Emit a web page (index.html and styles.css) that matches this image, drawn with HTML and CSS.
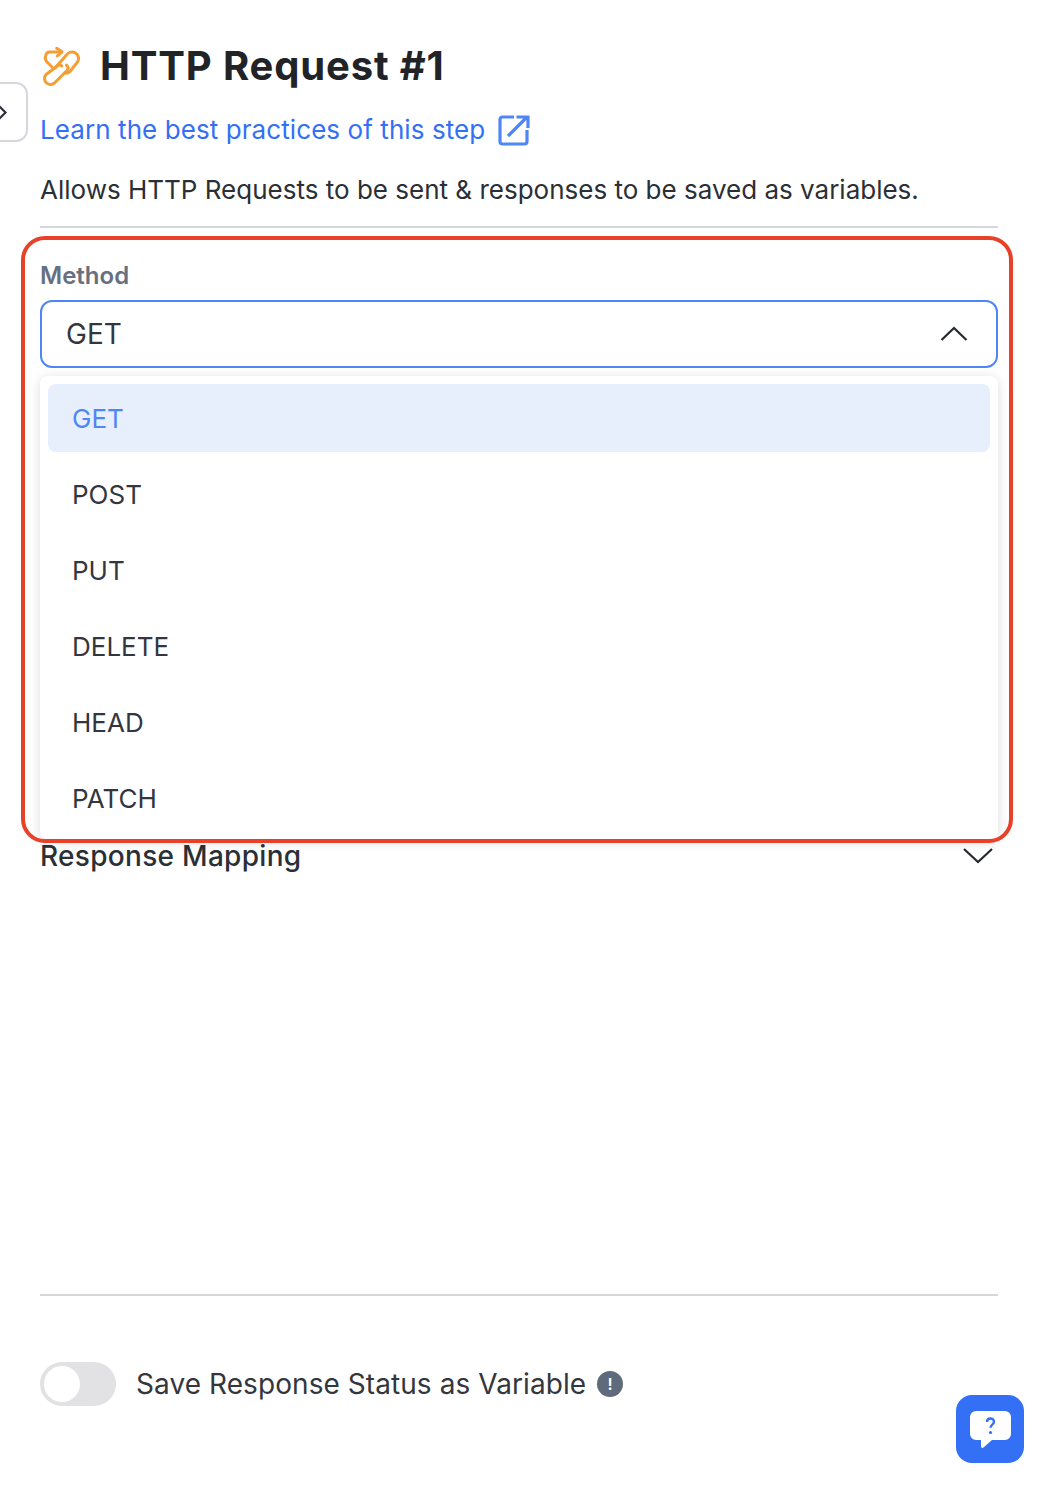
FILE: index.html
```html
<!DOCTYPE html>
<html>
  <head>
    <meta charset="UTF-8" />
    <title>HTTP Request #1</title>
    <link rel="stylesheet" href="styles.css">
  </head>
  <body>
    <button class="collapse-tab" type="button" aria-label="Collapse">
      <svg viewBox="0 0 12 20" width="12" height="20">
        <path d="M1 4l6.500 6.500L1 17" fill="none" stroke="#2b2f36" stroke-width="2.200" />
      </svg>
    </button>

    <div class="panel">
      <div class="step-header">
        <svg class="step-icon" viewBox="0 0 40 40" width="40" height="40">
          <g fill="none" stroke="#f59e33" stroke-width="3" stroke-linecap="round" stroke-linejoin="round">
            <path d="M11.700 20.700L7 16c-1.800-1.800-2-4-1.500-6 .5-2.500 2-4 4-4H21" />
            <path d="M16.700 2.300L22 5.800l-4.700 4.200" />
            <path d="M15 22L26.500 9a6.500 6.500 0 0 1 11 7L30 25.500c-1.500 1.500-3.500 2-5 1" />
            <path d="M26.500 19c1.800 1.800 2 4 .3 5.800L15 36.500a6 6 0 0 1-9-8L18 19.500c1-1 2.500-1 3.700.5" />
          </g>
        </svg>
        <h1 class="step-title">HTTP Request #1</h1>
      </div>

      <a class="learn-link" href="#">
        Learn the best practices of this step
        <svg viewBox="0 0 32 32" width="32" height="32">
          <path d="M16 3H4.500A2.500 2.500 0 0 0 2 5.500v22A2.500 2.500 0 0 0 4.500 30h22a2.500 2.500 0 0 0 2.500-2.500V16" fill="none" stroke="#4f86f7" stroke-width="3.200" />
          <path d="M10 22L29 3M18.500 3H30v11" fill="none" stroke="#4f86f7" stroke-width="3.200" />
        </svg>
      </a>

      <p class="step-desc">Allows HTTP Requests to be sent &amp; responses to be saved as variables.</p>

      <hr class="divider" />

      <div class="field">
        <label class="field-label">Method</label>
        <div class="select-box">
          <span>GET</span>
          <svg viewBox="0 0 28 16" width="28" height="16">
            <path d="M1.500 14L14 2l12.500 12" fill="none" stroke="#26292e" stroke-width="2.200" />
          </svg>
        </div>

        <ul class="dropdown">
          <li class="option selected">GET</li>
          <li class="option">POST</li>
          <li class="option">PUT</li>
          <li class="option">DELETE</li>
          <li class="option">HEAD</li>
          <li class="option">PATCH</li>
        </ul>
        <div class="highlight-box"></div>
      </div>

      <div class="section-row">
        <span>Response Mapping</span>
        <svg viewBox="0 0 32 18" width="32" height="18">
          <path d="M2 2l14 13L30 2" fill="none" stroke="#26292e" stroke-width="2.200" />
        </svg>
      </div>

      <hr class="divider bottom-divider" />

      <div class="toggle-row">
        <span class="toggle"><span class="toggle-knob"></span></span>
        <span class="toggle-label">Save Response Status as Variable</span>
        <span class="info-dot">!</span>
      </div>
    </div>

    <button class="help-btn" type="button" aria-label="Help">
      <svg viewBox="0 0 43 40" width="43" height="40">
        <path d="M7 1h29a6 6 0 0 1 6 6v17a6 6 0 0 1-6 6H23l-8.500 7.500c-1 .8-2.500.3-2.500-1V30H7a6 6 0 0 1-6-6V7a6 6 0 0 1 6-6z" fill="#fff" />
        <path d="M18 12c0-2 1.500-3.500 3.500-3.500s3.500 1.500 3.500 3.300c0 3-3.500 2.800-3.500 6" fill="none" stroke="#3370f5" stroke-width="2.400" />
        <circle cx="21.500" cy="22.500" r="1.600" fill="#3370f5" />
      </svg>
    </button>
  </body>
</html>
```

FILE: styles.css
```css
* {
  margin: 0;
  padding: 0;
  box-sizing: border-box;
}

html,
body {
  height: 100%;
}

body {
  font-family: Inter, "Liberation Sans", Arial, sans-serif;
  background: #fff;
  color: #26292e;
  position: relative;
  overflow: hidden;
}

.panel {
  padding: 40px 40px 0;
}

.collapse-tab {
  position: absolute;
  left: -30px;
  top: 82px;
  width: 58px;
  height: 60px;
  background: #fff;
  border: 2px solid #d5d7db;
  border-radius: 12px;
  display: flex;
  align-items: center;
  justify-content: flex-end;
  padding-right: 16px;
}

.step-header {
  display: flex;
  align-items: center;
  gap: 20px;
  height: 52px;
}

.step-icon {
  flex-shrink: 0;
}

.step-title {
  font-size: 40px;
  font-weight: 700;
  line-height: 52px;
  letter-spacing: 0.85px;
  color: #212327;
  white-space: nowrap;
}

.learn-link {
  display: flex;
  align-items: center;
  gap: 13px;
  margin-top: 22px;
  height: 32px;
  font-size: 26px;
  line-height: 32px;
  letter-spacing: 0.08px;
  color: #3370f5;
  text-decoration: none;
}

.step-desc {
  margin-top: 28px;
  font-size: 26px;
  line-height: 32px;
  color: #2b2f36;
  white-space: nowrap;
}

.divider {
  border: none;
  border-top: 2px solid #d5d7db;
  margin-top: 20px;
}

.field {
  position: relative;
  margin-top: 32px;
}

.field-label {
  display: block;
  font-size: 24px;
  font-weight: 600;
  line-height: 32px;
  color: #667080;
}

.select-box {
  display: flex;
  align-items: center;
  justify-content: space-between;
  height: 68px;
  margin-top: 8px;
  padding: 0 28px 0 24px;
  border: 2px solid #4f86f7;
  border-radius: 12px;
  font-size: 28px;
  color: #33373d;
}

.dropdown {
  position: absolute;
  top: 116px;
  left: 0;
  right: 0;
  display: flex;
  flex-direction: column;
  gap: 8px;
  padding: 8px;
  list-style: none;
  background: #fff;
  border-radius: 8px;
  box-shadow: 0 2px 12px rgba(0, 0, 0, 0.14);
  z-index: 2;
}

.option {
  height: 68px;
  padding: 0 24px;
  border-radius: 8px;
  font-size: 26px;
  line-height: 70px;
  color: #33373d;
}

.option.selected {
  background: #e8effc;
  color: #4f86f7;
}

.highlight-box {
  position: absolute;
  top: -24px;
  left: -19px;
  width: 992px;
  height: 607px;
  border: 4px solid #e8412a;
  border-radius: 24px;
  z-index: 3;
}

.section-row {
  display: flex;
  align-items: center;
  justify-content: space-between;
  margin-top: 470px;
  padding-right: 4px;
  height: 36px;
  font-size: 28px;
  font-weight: 500;
  letter-spacing: 0.3px;
  color: #2b2f36;
}

.bottom-divider {
  margin-top: 420px;
}

.toggle-row {
  display: flex;
  align-items: center;
  margin-top: 65px;
  height: 46px;
}

.toggle {
  display: block;
  width: 76px;
  height: 44px;
  padding: 4px;
  border-radius: 22px;
  background: #e2e2e4;
}

.toggle-knob {
  display: block;
  width: 36px;
  height: 36px;
  border-radius: 50%;
  background: #fff;
}

.toggle-label {
  margin-left: 20px;
  font-size: 28px;
  letter-spacing: 0.07px;
  color: #33373d;
  white-space: nowrap;
}

.info-dot {
  width: 26px;
  height: 26px;
  margin-left: 11px;
  border-radius: 50%;
  background: #5f6b7c;
  color: #fff;
  font-size: 16px;
  font-weight: 600;
  line-height: 26px;
  text-align: center;
}

.help-btn {
  position: absolute;
  left: 956px;
  top: 1395px;
  width: 68px;
  height: 68px;
  border: none;
  border-radius: 16px;
  background: #3370f5;
  display: flex;
  align-items: center;
  justify-content: center;
  padding-top: 2px;
}
```
